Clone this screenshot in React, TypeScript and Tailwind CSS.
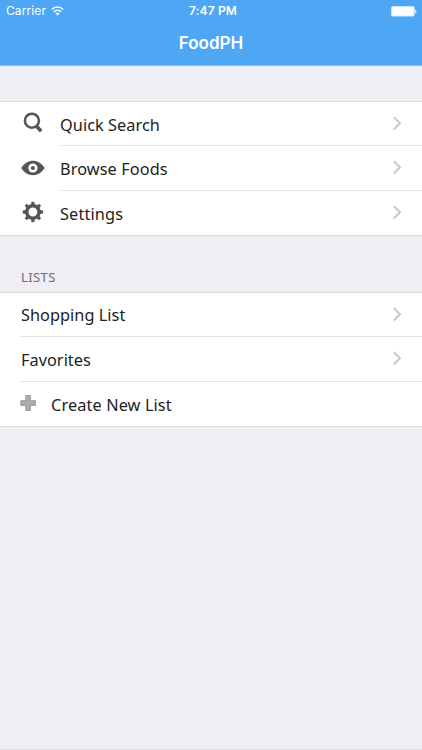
import React from 'react';

interface RowProps {
  label: string;
  icon?: React.ReactNode;
  height: string;
  inset?: string;
  gap?: string;
  labelClass: string;
  chevron?: boolean;
  last?: boolean;
}

const Chevron: React.FC = () => (
  <svg className="absolute right-[19px] top-[13px] h-4 w-3" viewBox="0 0 12 16" fill="none" aria-hidden="true">
    <path d="M2.8 2.1 L9 8.3 L2.8 14.5" stroke="#c7c7cc" strokeWidth="2" />
  </svg>
);

const SearchIcon: React.FC = () => (
  <svg className="h-6 w-6" viewBox="0 0 24 24" fill="none" stroke="#555" aria-hidden="true">
    <circle cx="10.9" cy="9.7" r="7" strokeWidth="2.5" />
    <path d="M15.6 15.2 L20.2 20.2" strokeWidth="3.6" />
  </svg>
);

const EyeIcon: React.FC = () => (
  <svg className="h-6 w-6" viewBox="0 0 24 24" aria-hidden="true">
    <path d="M0.2 12 C6.6 2.4 17.2 2.4 23.6 12 C17.2 21.6 6.6 21.6 0.2 12 Z" fill="#555" />
    <circle cx="11.9" cy="12" r="4.6" fill="#fff" />
    <circle cx="11.9" cy="12" r="2.1" fill="#555" />
  </svg>
);

const teeth = [0, 45, 90, 135, 180, 225, 270, 315];

const GearIcon: React.FC = () => (
  <svg className="h-6 w-6" viewBox="0 0 24 24" aria-hidden="true">
    <circle cx="11.9" cy="12" r="6.2" fill="none" stroke="#555" strokeWidth="3.5" />
    {teeth.map((angle) => (
      <path key={angle} d="M10 5.6 L10.5 1.8 H13.3 L13.8 5.6 Z" fill="#555" transform={`rotate(${angle} 11.9 12)`} />
    ))}
  </svg>
);

const PlusIcon: React.FC = () => (
  <svg className="h-4 w-4" viewBox="0 0 16 16" aria-hidden="true">
    <path d="M5.8 0.5 H10.5 V5.6 H15.5 V10.4 H10.5 V15.5 H5.8 V10.4 H0.8 V5.6 H5.8 Z" fill="#acacac" stroke="#929292" strokeWidth="0.8" />
  </svg>
);

const Row: React.FC<RowProps> = ({ label, icon, height, inset = '', gap = '', labelClass, chevron = true, last = false }) => (
  <li className={`relative flex ${height} ${inset}`}>
    {icon && <span className={`flex shrink-0 items-start ${gap}`}>{icon}</span>}
    <div className={`flex-1 ${last ? '' : 'border-b border-[#e3e3e5]'}`}>
      <span className={`block w-max text-[16.3px] leading-6 text-[#222] ${labelClass}`}>{label}</span>
    </div>
    {chevron && <Chevron />}
  </li>
);

export default function App() {
  return (
    <div className="flex h-[750px] w-full flex-col overflow-hidden border-b border-[#dedee3] bg-[#efeef5] font-['Noto_Sans',sans-serif]">
      <header className="h-[66px] shrink-0 border-b border-[#8bbfea] bg-[#4ea7f4] font-['Inter',sans-serif] text-white">
        {/* Status bar */}
        <div className="grid h-[22px] grid-cols-3 items-center pl-[6px] pr-[5px] text-[12px]">
          <div className="flex items-center gap-[5px]">
            <span className="tracking-[0.1px]">Carrier</span>
            <svg className="h-[10px] w-[13px]" viewBox="0 0 13 10" fill="none" stroke="#fff" strokeWidth="1.5" aria-hidden="true">
              <path d="M0.7 3.5 C4 0.2 9 0.2 12.3 3.5" />
              <path d="M2.8 5.7 C4.9 3.7 8.1 3.7 10.2 5.7" />
              <path d="M4.4 7.4 C5.7 6.3 7.3 6.3 8.6 7.4 L6.5 9.6 Z" fill="#fff" stroke="none" />
            </svg>
          </div>
          <span className="pl-[3px] text-center font-semibold tracking-[0.15px]">7:47 PM</span>
          <svg className="h-[11px] w-[26px] justify-self-end" viewBox="0 0 26 11" aria-hidden="true">
            <rect x="0.5" y="0.5" width="22.7" height="9.6" rx="1.2" fill="#fff" stroke="#d3e9fc" strokeWidth="0.8" />
            <path d="M24 3.7 C26 3.8 26 7.2 24 7.3 Z" fill="#e4f2fe" />
          </svg>
        </div>
        <h1 className="text-center text-[17px] font-semibold leading-[42px]">FoodPH</h1>
      </header>

      <nav className="mt-[35px] border-y border-[#dcdce1] bg-white">
        <ul>
          <Row label="Quick Search" icon={<SearchIcon />} height="h-[44px]" inset="pl-[21px]" gap="w-[39px] pt-[9px]" labelClass="pt-[11px] tracking-[0.06px]" />
          <Row label="Browse Foods" icon={<EyeIcon />} height="h-[45px]" inset="pl-[21px]" gap="w-[39px] pt-[10px]" labelClass="pt-[11px] tracking-[0.1px]" />
          <Row label="Settings" icon={<GearIcon />} height="h-[44px]" inset="pl-[21px]" gap="w-[39px] pt-[9px]" labelClass="pt-[11px] tracking-[0.15px]" last />
        </ul>
      </nav>

      <section>
        <h2 className="h-[56px] pl-[21px] pt-[31px] text-[13px] leading-5 tracking-[0.4px] text-[#6d6d72]">LISTS</h2>
        <ul className="border-y border-[#dcdce1] bg-white">
          <Row label="Shopping List" height="h-[44px]" inset="pl-[21px]" labelClass="pt-[10px] tracking-[0.04px]" />
          <Row label="Favorites" height="h-[45px]" inset="pl-[21px]" labelClass="pt-[11px] tracking-[0.04px]" />
          <Row label="Create New List" icon={<PlusIcon />} height="h-[44px]" inset="pl-[20px]" gap="w-[31px] pt-[13px]" labelClass="pt-[11px] tracking-[0.12px]" chevron={false} last />
        </ul>
      </section>
    </div>
  );
}
